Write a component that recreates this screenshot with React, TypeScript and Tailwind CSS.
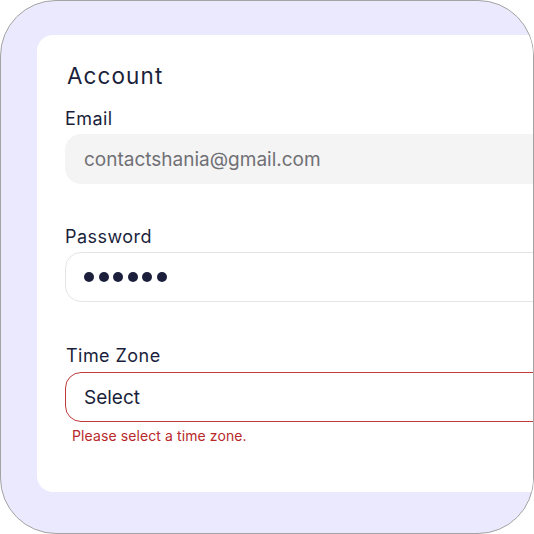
import React from 'react';

const Label: React.FC<{ children: React.ReactNode; className?: string }> = ({ children, className = '' }) => (
  <label className={`block text-[18px] leading-[24px] tracking-[0.45px] text-[#1b1f3b] ${className}`}>{children}</label>
);

export default function App() {
  return (
    <div className="w-[534px] h-[534px] bg-white font-['Inter',sans-serif]">
      <div className="w-[534px] h-[534px] rounded-[56px] border border-[#a3a3a3] bg-[#ebe9fe] overflow-hidden pt-[34px] pl-[36px]">
        {/* Account card */}
        <div className="w-[620px] h-[457px] shrink-0 bg-white rounded-[16px] pl-[28px] pt-[27px]">
          <h1 className="pl-[2px] text-[22.5px] leading-[28px] tracking-[1.1px] text-[#1b1f3b]">Account</h1>

          <Label className="mt-[17px]">Email</Label>
          <div className="mt-[3px] h-[50px] rounded-[16px] bg-[#f4f4f4] pl-[19px] pt-[2px] flex items-center text-[19px] text-[#707074]">
            contactshania@gmail.com
          </div>

          <Label className="mt-[41px]">Password</Label>
          <div className="mt-[3px] h-[50px] rounded-[16px] border border-[#e4e4e4] bg-white pl-[18px] flex items-center gap-[4.5px]">
            {[0, 1, 2, 3, 4, 5].map(i => (
              <span key={i} className="w-[10px] h-[10px] rounded-full bg-[#1b1f3b]" />
            ))}
          </div>

          <Label className="mt-[42px] pl-[1px]">Time Zone</Label>
          <div className="mt-[4px] h-[50px] rounded-[16px] border border-[#c0393b] bg-white pl-[18px] pt-[2px] flex items-center text-[19px] text-[#1b1f3b]">
            Select
          </div>
          <p className="mt-[4px] pl-[7px] text-[14px] leading-[20px] tracking-[0.1px] text-[#b8282a]">Please select a time zone.</p>
        </div>
      </div>
    </div>
  );
}
